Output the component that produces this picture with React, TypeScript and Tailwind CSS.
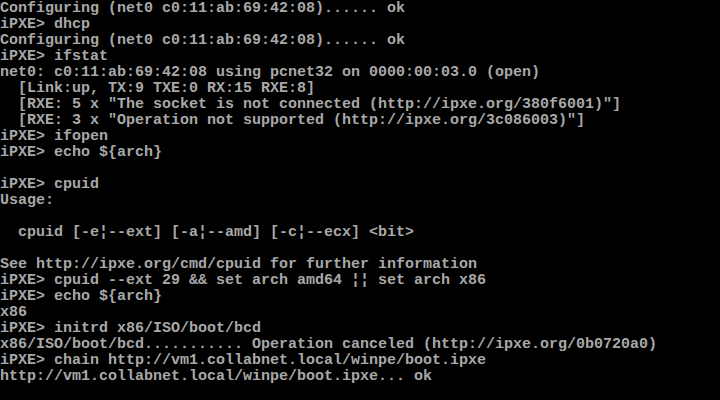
const lines = [
  "Configuring (net0 c0:11:ab:69:42:08)...... ok",
  "iPXE> dhcp",
  "Configuring (net0 c0:11:ab:69:42:08)...... ok",
  "iPXE> ifstat",
  "net0: c0:11:ab:69:42:08 using pcnet32 on 0000:00:03.0 (open)",
  "  [Link:up, TX:9 TXE:0 RX:15 RXE:8]",
  "  [RXE: 5 x \"The socket is not connected (http://ipxe.org/380f6001)\"]",
  "  [RXE: 3 x \"Operation not supported (http://ipxe.org/3c086003)\"]",
  "iPXE> ifopen",
  "iPXE> echo ${arch}",
  "",
  "iPXE> cpuid",
  "Usage:",
  "",
  "  cpuid [-e¦--ext] [-a¦--amd] [-c¦--ecx] <bit>",
  "",
  "See http://ipxe.org/cmd/cpuid for further information",
  "iPXE> cpuid --ext 29 && set arch amd64 ¦¦ set arch x86",
  "iPXE> echo ${arch}",
  "x86",
  "iPXE> initrd x86/ISO/boot/bcd",
  "x86/ISO/boot/bcd........... Operation canceled (http://ipxe.org/0b0720a0)",
  "iPXE> chain http://vm1.collabnet.local/winpe/boot.ipxe",
  "http://vm1.collabnet.local/winpe/boot.ipxe... ok",
];

export default function App() {
  return (
    <div className="w-[720px] h-[400px] bg-black overflow-hidden pt-px">
      {lines.map((l, i) => (
        <div
          key={i}
          className="h-[16px] leading-[16px] text-[15px] font-bold text-[#a8a8a8] whitespace-pre font-['Liberation_Mono',monospace]"
        >
          {l}
        </div>
      ))}
    </div>
  );
}
